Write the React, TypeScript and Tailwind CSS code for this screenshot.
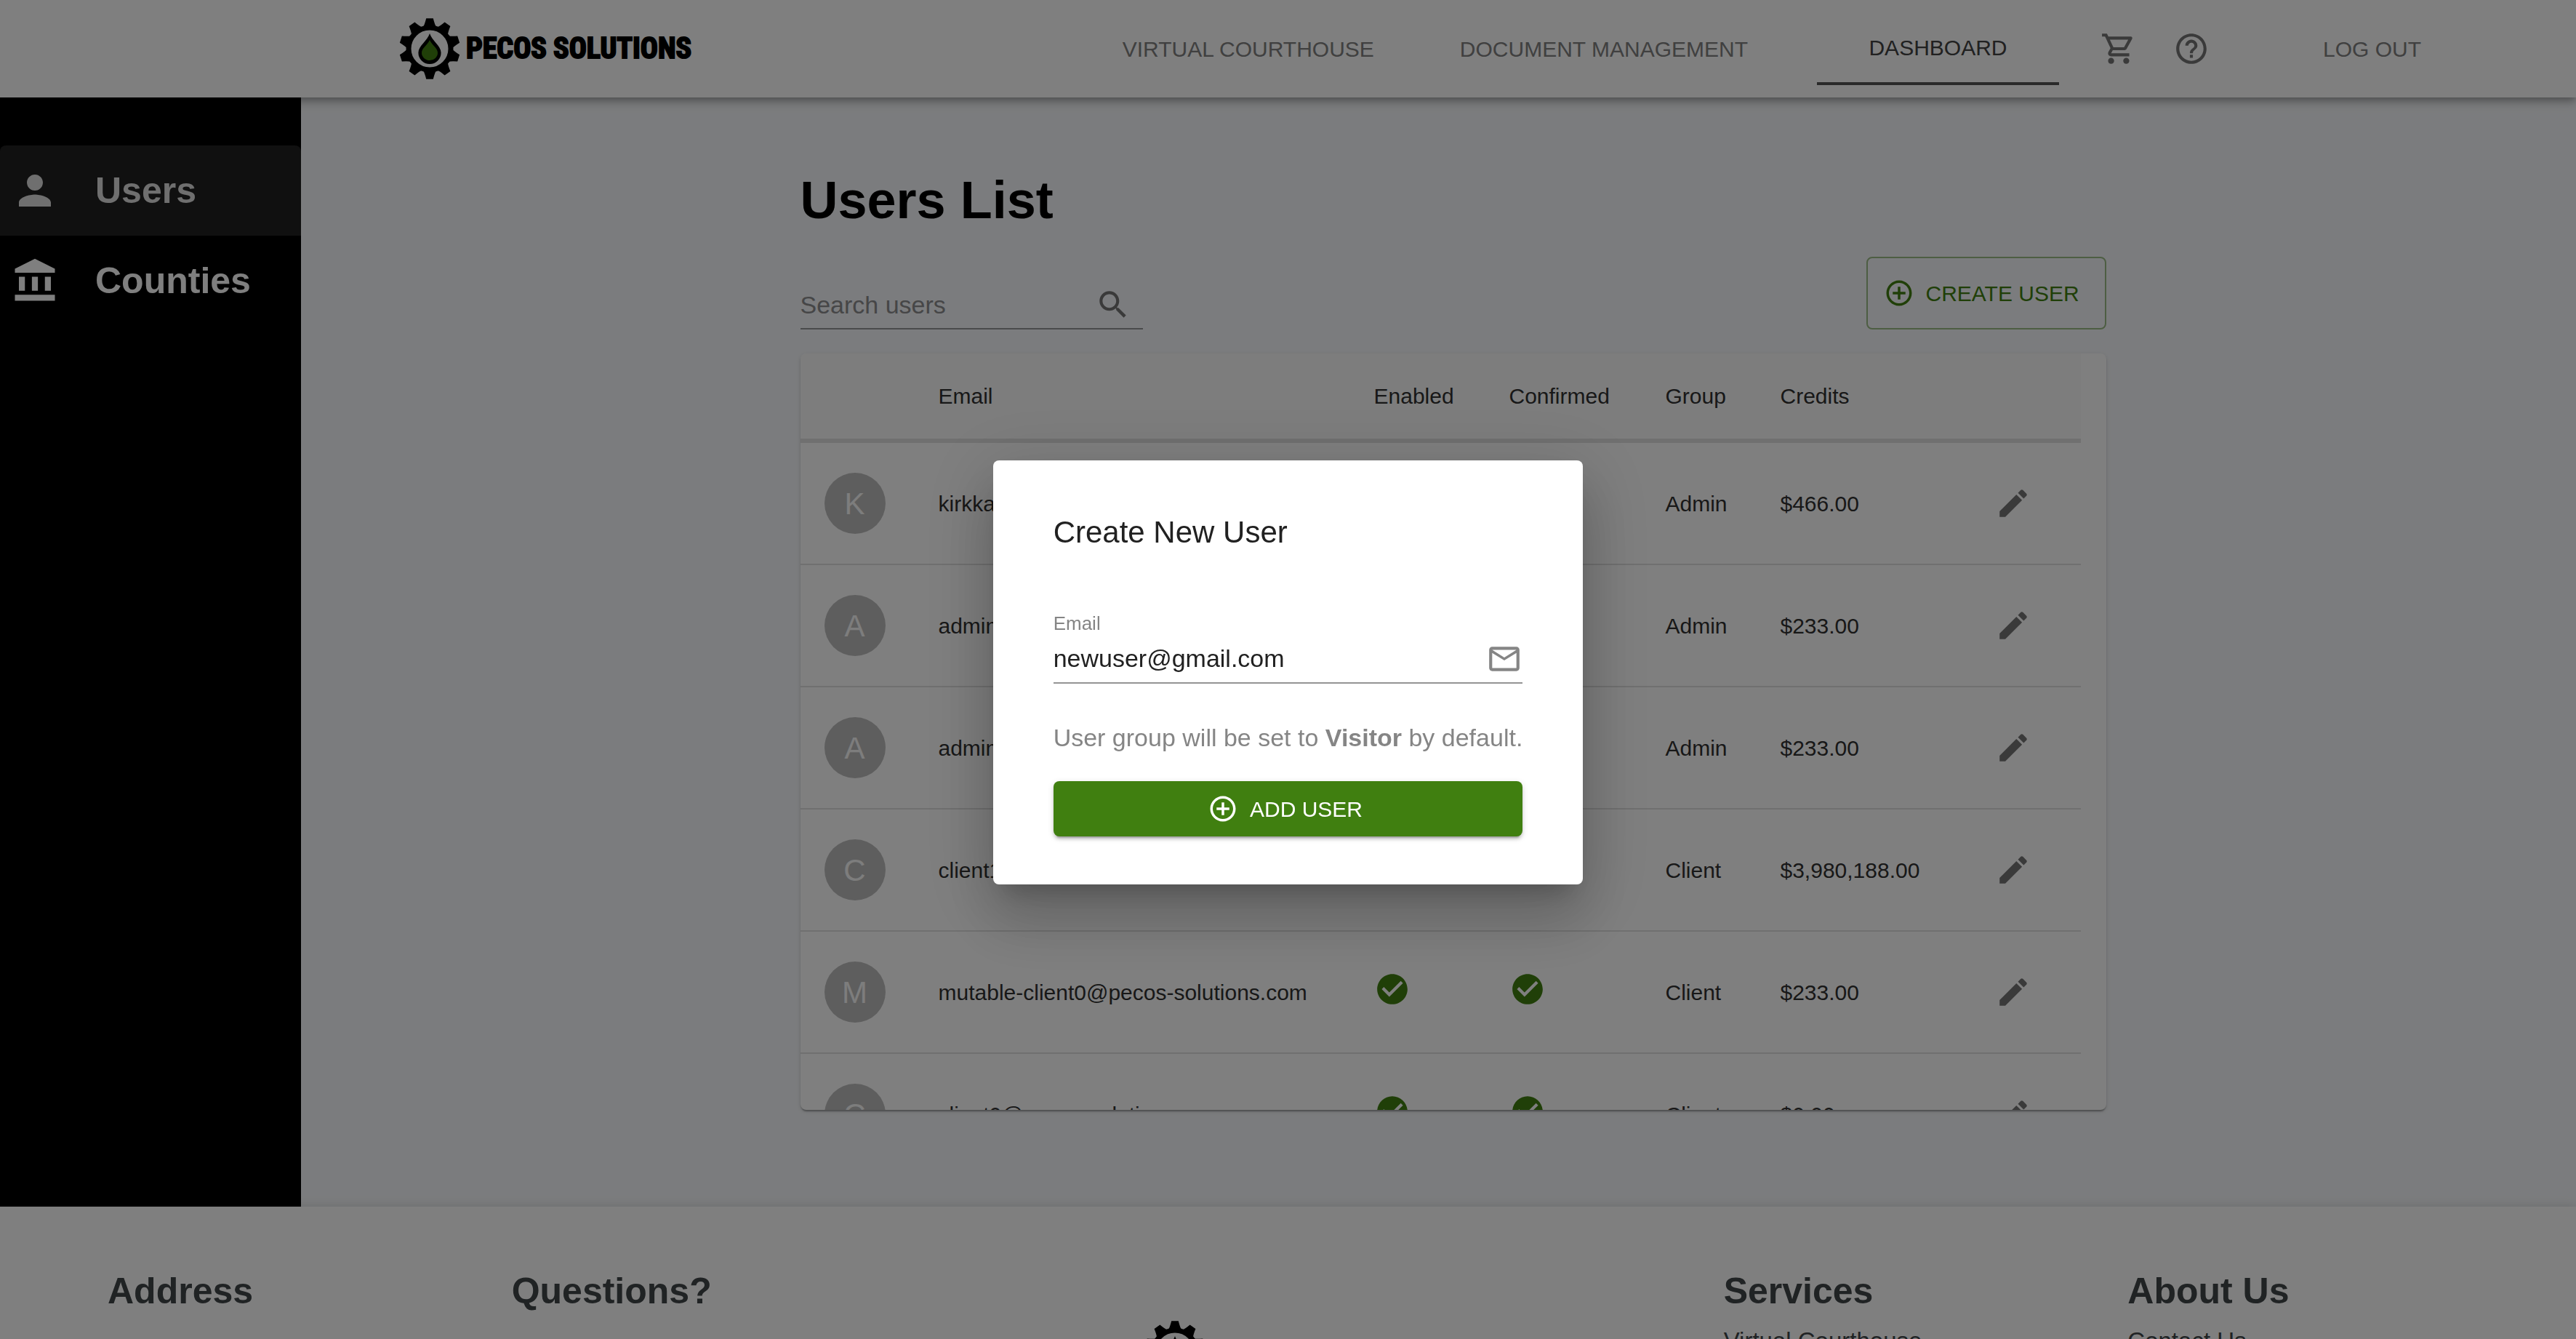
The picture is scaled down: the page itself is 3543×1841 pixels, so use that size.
import type { ReactNode } from "react";

const ICONS = {
  cart: "M15.55 13c.75 0 1.41-.41 1.75-1.03l3.58-6.49c.37-.66-.11-1.48-.87-1.48H5.21l-.94-2H1v2h2l3.6 7.59-1.35 2.44C4.52 15.37 5.48 17 7 17h12v-2H7l1.1-2h7.45zM6.16 6h12.15l-2.76 5H8.53L6.16 6zM7 18c-1.1 0-1.99.9-1.99 2S5.9 22 7 22s2-.9 2-2-.9-2-2-2zm10 0c-1.1 0-1.99.9-1.99 2s.89 2 1.99 2 2-.9 2-2-.9-2-2-2z",
  help: "M11 18h2v-2h-2v2zm1-16C6.48 2 2 6.48 2 12s4.48 10 10 10 10-4.48 10-10S17.52 2 12 2zm0 18c-4.41 0-8-3.59-8-8s3.59-8 8-8 8 3.59 8 8-3.59 8-8 8zm0-14c-2.21 0-4 1.79-4 4h2c0-1.1.9-2 2-2s2 .9 2 2c0 2-3 1.75-3 5h2c0-2.25 3-2.5 3-5 0-2.21-1.79-4-4-4z",
  person: "M12 12c2.21 0 4-1.79 4-4s-1.79-4-4-4-4 1.79-4 4 1.79 4 4 4zm0 2c-2.67 0-8 1.34-8 4v2h16v-2c0-2.66-5.33-4-8-4z",
  bank: "M4 10h3v7H4zM10.5 10h3v7h-3zM2 19h20v3H2zM17 10h3v7h-3zM12 1L2 6v2h20V6z",
  search: "M15.5 14h-.79l-.28-.27C15.41 12.59 16 11.11 16 9.5 16 5.91 13.09 3 9.5 3S3 5.91 3 9.5 5.91 16 9.5 16c1.61 0 3.09-.59 4.23-1.57l.27.28v.79l5 4.99L20.49 19l-4.99-5zm-6 0C7.01 14 5 11.99 5 9.5S7.01 5 9.5 5 14 7.01 14 9.5 11.99 14 9.5 14z",
  add: "M13 7h-2v4H7v2h4v4h2v-4h4v-2h-4V7zm-1-5C6.48 2 2 6.48 2 12s4.48 10 10 10 10-4.48 10-10S17.52 2 12 2zm0 18c-4.41 0-8-3.59-8-8s3.59-8 8-8 8 3.59 8 8-3.59 8-8 8z",
  check: "M12 2C6.48 2 2 6.48 2 12s4.48 10 10 10 10-4.48 10-10S17.52 2 12 2zm-2 15l-5-5 1.41-1.41L10 14.17l7.59-7.59L19 8l-9 9z",
  edit: "M3 17.25V21h3.75L17.81 9.94l-3.75-3.75L3 17.25zM20.71 7.04c.39-.39.39-1.02 0-1.41l-2.34-2.34c-.39-.39-1.02-.39-1.41 0l-1.83 1.83 3.75 3.75 1.83-1.83z",
  mail: "M20 4H4c-1.1 0-1.99.9-1.99 2L2 18c0 1.1.9 2 2 2h16c1.1 0 2-.9 2-2V6c0-1.1-.9-2-2-2zm0 14H4V8l8 5 8-5v10zm-8-7L4 6h16l-8 5z",
};

function Icon({ name, className }: { name: keyof typeof ICONS; className: string }) {
  return (
    <svg viewBox="0 0 24 24" fill="currentColor" aria-hidden="true" className={`shrink-0 ${className}`}>
      <path d={ICONS[name]} />
    </svg>
  );
}

const TEETH = [0, 36, 72, 108, 144, 180, 216, 252, 288, 324];

function Logo() {
  return (
    <div className="flex items-center gap-2">
      <svg viewBox="-42 -42 84 84" className="size-[84px] shrink-0" aria-hidden="true">
        <circle r="29" fill="none" stroke="#000" strokeWidth="7" />
        {TEETH.map((angle) => (
          <path key={angle} d="M-9 -30Q-7 -33 -4.8 -41.7H4.8Q7 -33 9 -30Z" transform={`rotate(${angle})`} />
        ))}
        <path d="M0 -21C3 -11 15.6 -4 15.6 5.5A15.6 15.6 0 0 1 -15.6 5.5C-15.6 -4 -3 -11 0 -21Z" />
        <path d="M0 -12C3 -5 11 -1 11 5.5A11 10.5 0 0 1 -11 5.5C-11 -1 -3 -5 0 -12Z" fill="#407f10" />
      </svg>
      <span className="text-[40px] leading-[48px] font-bold whitespace-nowrap text-black [-webkit-text-stroke:2px_#000] font-['Impact','Liberation_Sans_Narrow','Roboto_Condensed',sans-serif]">
        PECOS SOLUTIONS
      </span>
    </div>
  );
}

function Header() {
  return (
    <header className="relative z-10 flex h-[134px] shrink-0 items-center bg-white pr-[213px] pl-[549px] text-[30px] text-[#808080] shadow-[0_4px_8px_-2px_rgba(0,0,0,0.2),0_8px_10px_rgba(0,0,0,0.14),0_2px_20px_rgba(0,0,0,0.12)]">
      <a href="#home" aria-label="Pecos Solutions">
        <Logo />
      </a>
      <nav className="ml-auto flex items-center whitespace-nowrap">
        <a href="#courthouse">VIRTUAL COURTHOUSE</a>
        <a href="#documents" className="ml-[118px]">DOCUMENT MANAGEMENT</a>
        <a
          href="#dashboard"
          aria-current="page"
          className="ml-[95px] flex h-[100px] w-[333px] items-center justify-center border-b-4 border-[#545454] text-[#424242]"
        >
          DASHBOARD
        </a>
        <button type="button" aria-label="Cart" className="ml-[57px] text-[#757575]">
          <Icon name="cart" className="size-[50px]" />
        </button>
        <button type="button" aria-label="Help" className="ml-[50px] text-[#757575]">
          <Icon name="help" className="size-[50px]" />
        </button>
        <button type="button" className="ml-[156px]">LOG OUT</button>
      </nav>
    </header>
  );
}

function Sidebar() {
  return (
    <aside className="z-20 w-[414px] shrink-0 bg-black pt-[66px] text-[50px] font-bold text-white">
      <nav>
        <a href="#users" aria-current="page" className="flex h-[124px] items-center gap-[50px] rounded-t-lg bg-[#202020] pl-[15px] text-[#dedede]">
          <Icon name="person" className="size-[66px]" />
          Users
        </a>
        <a href="#counties" className="flex h-[124px] items-center gap-[50px] pl-[15px]">
          <Icon name="bank" className="size-[66px]" />
          Counties
        </a>
      </nav>
    </aside>
  );
}

const USERS = [
  { email: "kirkka@pecos-solutions.com", group: "Admin", credits: "$466.00" },
  { email: "admin0@pecos-solutions.com", group: "Admin", credits: "$233.00" },
  { email: "admin1@pecos-solutions.com", group: "Admin", credits: "$233.00" },
  { email: "client1@pecos-solutions.com", group: "Client", credits: "$3,980,188.00" },
  { email: "mutable-client0@pecos-solutions.com", group: "Client", credits: "$233.00" },
  { email: "client0@pecos-solutions.com", group: "Client", credits: "$0.00" },
];

function Th({ children, className = "" }: { children?: ReactNode; className?: string }) {
  return (
    <th scope="col" className={`h-[123px] border-b-[6px] border-[#e0e0e0] bg-[#fafafa] px-[33px] text-left font-normal ${className}`}>
      {children}
    </th>
  );
}

function Td({ children }: { children: ReactNode }) {
  return <td className="h-[168px] border-b-2 border-[#e0e0e0] px-[33px] whitespace-nowrap">{children}</td>;
}

function UsersTable() {
  return (
    <div className="mt-[33px] h-[1040px] overflow-hidden rounded-lg bg-white pr-[35px] shadow-[0_4px_2px_-2px_rgba(0,0,0,0.2),0_2px_2px_rgba(0,0,0,0.14),0_2px_6px_rgba(0,0,0,0.12)]">
      <table className="w-full table-fixed border-separate border-spacing-0 text-[30px] text-[#303030]">
        <thead>
          <tr>
            <Th className="w-[157px]" />
            <Th>Email</Th>
            <Th className="w-[186px]">Enabled</Th>
            <Th className="w-[215px]">Confirmed</Th>
            <Th className="w-[158px]">Group</Th>
            <Th className="w-[270px]">Credits</Th>
            <Th className="w-[176px]" />
          </tr>
        </thead>
        <tbody>
          {USERS.map((user) => (
            <tr key={user.email}>
              <Td>
                <div className="flex size-[84px] items-center justify-center rounded-full bg-[#bdbdbd] text-[42px] text-[#fafafa]">
                  {user.email[0].toUpperCase()}
                </div>
              </Td>
              <Td>{user.email}</Td>
              <Td>
                <Icon name="check" className="mb-2 size-[50px] text-[#407f10]" />
              </Td>
              <Td>
                <Icon name="check" className="mb-2 size-[50px] text-[#407f10]" />
              </Td>
              <Td>{user.group}</Td>
              <Td>{user.credits}</Td>
              <Td>
                <button type="button" aria-label={`Edit ${user.email}`} className="block p-[25px] text-[#757575]">
                  <Icon name="edit" className="size-[50px]" />
                </button>
              </Td>
            </tr>
          ))}
        </tbody>
      </table>
    </div>
  );
}

function UsersPage() {
  return (
    <main className="flex-1 bg-[#f7f9fc] pt-[99px] pb-[133px] pl-10">
      <div className="mx-auto w-full max-w-[1796px]">
        <h1 className="text-[72px] leading-[84px] font-bold text-black">Users List</h1>
        <div className="mt-9 flex items-end justify-between">
          <label className="flex h-[66px] w-[471px] items-center border-b-2 border-[#949698] pr-4 text-[#757575]">
            <input
              type="search"
              aria-label="Search users"
              placeholder="Search users"
              className="min-w-0 flex-1 bg-transparent text-[34px] outline-none placeholder:text-[#8c8d8f]"
            />
            <Icon name="search" className="size-[50px]" />
          </label>
          <button
            type="button"
            className="flex h-[100px] w-[330px] items-center gap-4 rounded-lg border-2 border-[#9bbc86] pl-[22px] text-[30px] whitespace-nowrap text-[#407f10]"
          >
            <Icon name="add" className="size-[42px]" />
            CREATE USER
          </button>
        </div>
        <UsersTable />
      </div>
    </main>
  );
}

function FooterColumn({ title, link }: { title: string; link?: string }) {
  return (
    <section>
      <h2 className="text-[50px] leading-[60px] font-bold">{title}</h2>
      {link && (
        <a href="#link" className="mt-[14px] block text-[33px] leading-[50px]">
          {link}
        </a>
      )}
    </section>
  );
}

function Footer() {
  return (
    <footer className="relative z-10 grid shrink-0 grid-cols-6 bg-white pt-[86px] pr-[61px] pb-20 pl-[148px] text-[#414649] shadow-[0_0_14px_rgba(0,0,0,0.14)]">
      <FooterColumn title="Address" />
      <FooterColumn title="Questions?" />
      <div className="col-span-2 flex justify-center pt-[71px] pr-20">
        <Logo />
      </div>
      <FooterColumn title="Services" link="Virtual Courthouse" />
      <FooterColumn title="About Us" link="Contact Us" />
    </footer>
  );
}

function CreateUserDialog() {
  return (
    <div className="fixed inset-0 z-50 flex items-center justify-center bg-black/50 pt-2">
      <form
        role="dialog"
        aria-modal="true"
        aria-labelledby="dialog-title"
        className="flex flex-col rounded-lg bg-white px-[83px] py-[66px] text-[34px] shadow-[0_23px_31px_-15px_rgba(0,0,0,0.2),0_50px_79px_6px_rgba(0,0,0,0.14),0_19px_96px_17px_rgba(0,0,0,0.12)]"
      >
        <h2 id="dialog-title" className="text-[42px] leading-[66px] text-[#212121]">
          Create New User
        </h2>
        <label htmlFor="email" className="mt-[76px] text-[26px] leading-8 text-[#858585]">
          Email
        </label>
        <div className="flex h-[67px] items-center border-b-2 border-[#949494] text-[#858585]">
          <input
            id="email"
            type="email"
            defaultValue="newuser@gmail.com"
            className="min-w-0 flex-1 bg-transparent text-[#212121] outline-none"
          />
          <Icon name="mail" className="size-[50px]" />
        </div>
        <p className="mt-12 leading-[52px] whitespace-nowrap text-[#858585]">
          User group will be set to <strong>Visitor</strong> by default.
        </p>
        <button
          type="button"
          className="mt-[34px] flex h-[76px] items-center justify-center gap-4 rounded-lg bg-[#407f10] pr-2 text-[30px] text-white shadow-[0_6px_2px_-4px_rgba(0,0,0,0.2),0_4px_4px_rgba(0,0,0,0.14),0_2px_10px_rgba(0,0,0,0.12)]"
        >
          <Icon name="add" className="size-[42px]" />
          ADD USER
        </button>
      </form>
    </div>
  );
}

export default function App() {
  return (
    <div className="flex h-screen flex-col overflow-hidden font-['Liberation_Sans',Arial,sans-serif]">
      <Header />
      <div className="flex shrink-0">
        <Sidebar />
        <UsersPage />
      </div>
      <Footer />
      <CreateUserDialog />
    </div>
  );
}
